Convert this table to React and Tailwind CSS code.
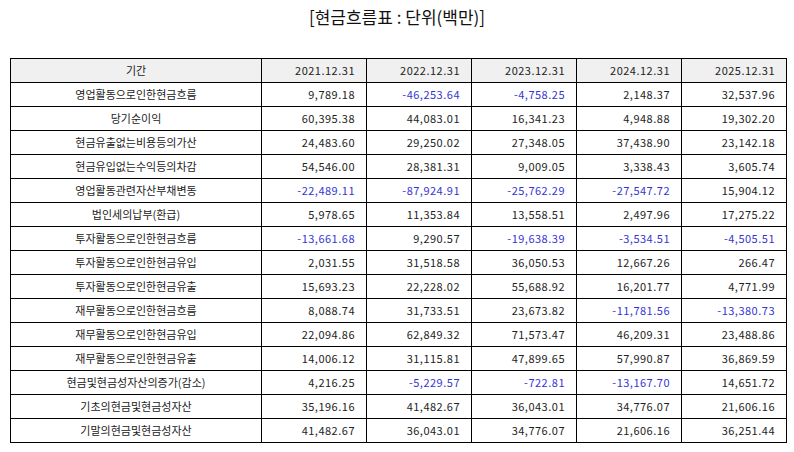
import React from "react";

const rows = [
  ["영업활동으로인한현금흐름", "9,789.18", "-46,253.64", "-4,758.25", "2,148.37", "32,537.96"],
  ["당기순이익", "60,395.38", "44,083.01", "16,341.23", "4,948.88", "19,302.20"],
  ["현금유출없는비용등의가산", "24,483.60", "29,250.02", "27,348.05", "37,438.90", "23,142.18"],
  ["현금유입없는수익등의차감", "54,546.00", "28,381.31", "9,009.05", "3,338.43", "3,605.74"],
  ["영업활동관련자산부채변동", "-22,489.11", "-87,924.91", "-25,762.29", "-27,547.72", "15,904.12"],
  ["법인세의납부(환급)", "5,978.65", "11,353.84", "13,558.51", "2,497.96", "17,275.22"],
  ["투자활동으로인한현금흐름", "-13,661.68", "9,290.57", "-19,638.39", "-3,534.51", "-4,505.51"],
  ["투자활동으로인한현금유입", "2,031.55", "31,518.58", "36,050.53", "12,667.26", "266.47"],
  ["투자활동으로인한현금유출", "15,693.23", "22,228.02", "55,688.92", "16,201.77", "4,771.99"],
  ["재무활동으로인한현금흐름", "8,088.74", "31,733.51", "23,673.82", "-11,781.56", "-13,380.73"],
  ["재무활동으로인한현금유입", "22,094.86", "62,849.32", "71,573.47", "46,209.31", "23,488.86"],
  ["재무활동으로인한현금유출", "14,006.12", "31,115.81", "47,899.65", "57,990.87", "36,869.59"],
  ["현금및현금성자산의증가(감소)", "4,216.25", "-5,229.57", "-722.81", "-13,167.70", "14,651.72"],
  ["기초의현금및현금성자산", "35,196.16", "41,482.67", "36,043.01", "34,776.07", "21,606.16"],
  ["기말의현금및현금성자산", "41,482.67", "36,043.01", "34,776.07", "21,606.16", "36,251.44"],
];

const years = ["2021.12.31", "2022.12.31", "2023.12.31", "2024.12.31", "2025.12.31"];

export default function App() {
  return (
    <div
      className="w-[794px] h-[452px] bg-white text-[#222]"
      style={{ fontFamily: '"Noto Sans CJK KR", "Noto Sans", sans-serif' }}
    >
      <div className="pt-[5px] h-[58px] text-center text-[17px] leading-[24px] text-[#111]">
        [현금흐름표 : 단위(백만)]
      </div>
      <table className="ml-[10px] w-[776px] border-collapse table-fixed text-[11px]">
        <colgroup>
          <col className="w-[251px]" />
          <col className="w-[105px]" />
          <col className="w-[105px]" />
          <col className="w-[105px]" />
          <col className="w-[105px]" />
          <col className="w-[105px]" />
        </colgroup>
        <thead>
          <tr className="h-[24px] bg-[#f0f0f0]">
            <th className="border border-black font-normal text-center p-0">기간</th>
            {years.map((y) => (
              <th
                key={y}
                className="border border-black font-normal text-right pr-[11px] p-0 tracking-[0.5px]"
              >
                {y}
              </th>
            ))}
          </tr>
        </thead>
        <tbody>
          {rows.map((r) => (
            <tr key={r[0]} className="h-[24px]">
              <td className="border border-black text-center p-0">{r[0]}</td>
              {r.slice(1).map((v, i) => (
                <td
                  key={i}
                  className={
                    "border border-black text-right pr-[11px] p-0 tracking-[0.5px] " +
                    (v.startsWith("-") ? "text-[#3434d4]" : "")
                  }
                >
                  {v}
                </td>
              ))}
            </tr>
          ))}
        </tbody>
      </table>
    </div>
  );
}
